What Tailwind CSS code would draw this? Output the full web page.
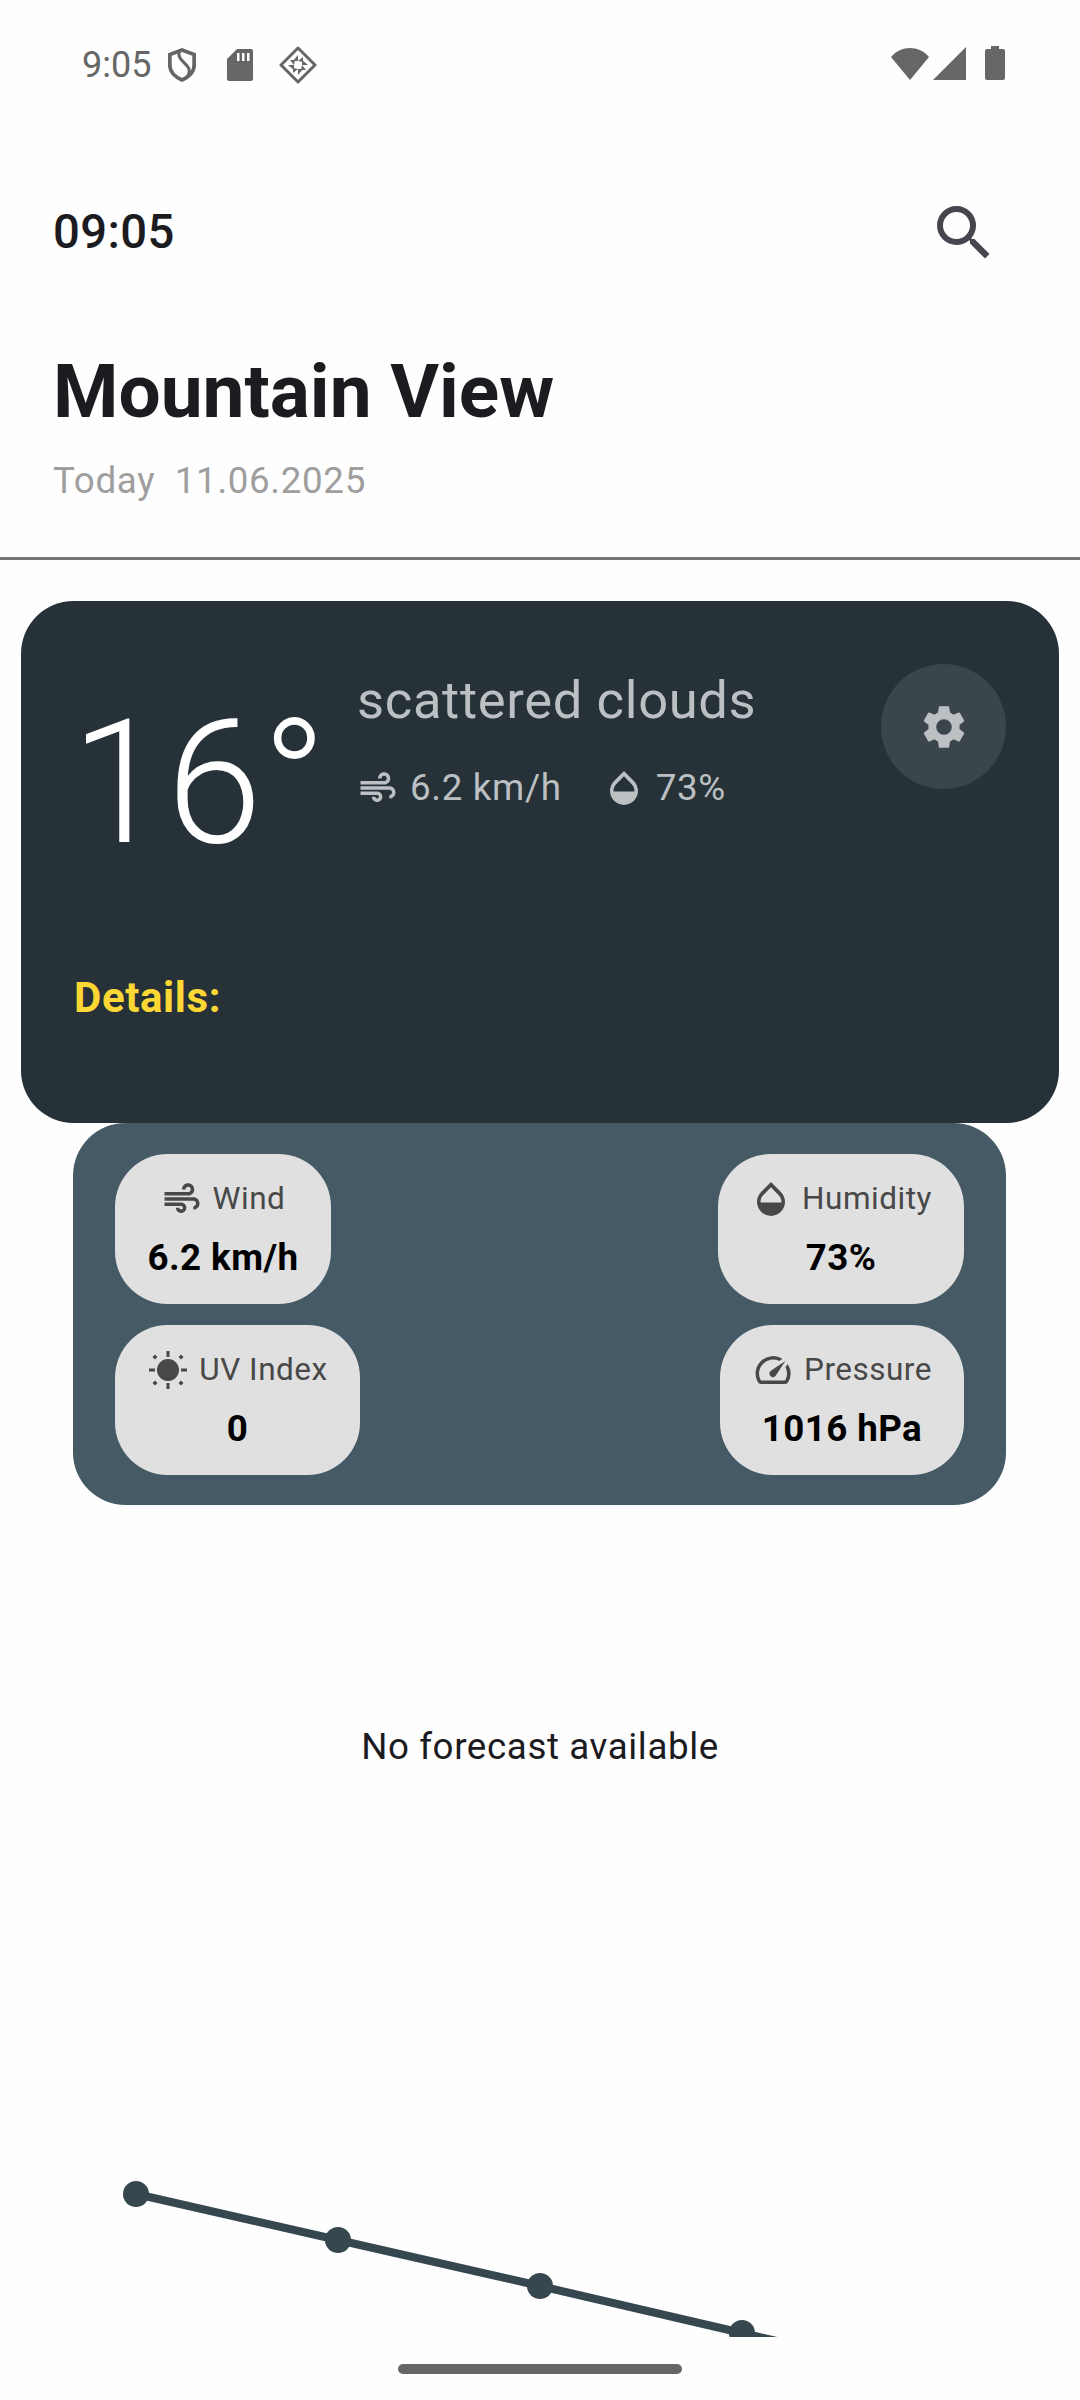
<!DOCTYPE html>
<html lang="en">
<head>
  <meta charset="UTF-8" />
  <title>Mountain View</title>
  <script src="https://cdn.jsdelivr.net/npm/@tailwindcss/browser@4"></script>
</head>
<body class="bg-white font-['Roboto',sans-serif] text-[#1c1b1f]">
<div class="relative w-[1080px] h-[2400px] overflow-hidden bg-[#fefefe]">

  <!-- STATUS BAR -->
  <div class="flex items-center justify-between h-[128px] pl-[82px] pr-[75px] text-[#666666]">
    <div class="mt-[2px] flex items-center">
      <span class="text-[36px] leading-none">9:05</span>
      <svg class="ml-[17px]" width="28" height="34" viewBox="0 0 28 34" fill="none" stroke="#666" stroke-width="3.800">
        <path d="M14 2 L26.200 6.500 V17 C26.200 24 21 29 14 32 C7 29 1.800 24 1.800 17 V6.500 Z"/>
        <path d="M11.500 3 C8 11 19 15 21 21 C22 25 20 28 18 30" stroke-width="3"/>
      </svg>
      <svg class="ml-[31px]" width="26" height="32" viewBox="0 0 26 32" fill="#666">
        <path d="M10 0 H24 A2 2 0 0 1 26 2 V30 A2 2 0 0 1 24 32 H2 A2 2 0 0 1 0 30 V10 Z"/>
        <path fill="#fefefe" d="M10 4 h2.500 v8 h-2.500 z M15 4 h2.500 v8 h-2.500 z M20 4 h2.500 v8 h-2.500 z"/>
      </svg>
      <svg class="ml-[26px]" width="38" height="38" viewBox="0 0 38 38" fill="#666">
        <path d="M19 2 L36 19 L19 36 L2 19 Z" fill="none" stroke="#666" stroke-width="3" stroke-linejoin="round"/>
        <path d="M19 9 V15 L14 15 Z M24 11 L24 16 L19 15 Z M29 19 L23 19 L23 14 Z M27 24 L22 24 L23 19 Z M19 29 V23 L24 23 Z M14 27 L14 22 L19 23 Z M9 19 L15 19 L15 24 Z M11 14 L16 14 L15 19 Z"/>
      </svg>
    </div>
    <div class="mb-[2px] flex items-center">
      <svg width="40" height="33" viewBox="0 0 40 33" fill="#666"><path d="M1 10 C11 -2 29 -2 39 10 L20 33 Z"/></svg>
      <svg class="ml-[3px]" width="33" height="33" viewBox="0 0 33 33" fill="#666"><path d="M33 0 V33 H0 Z"/></svg>
      <svg class="ml-[19px]" width="20" height="34" viewBox="0 0 20 34" fill="#666"><path d="M6 0 H14 V3 H18 A2 2 0 0 1 20 5 V32 A2 2 0 0 1 18 34 H2 A2 2 0 0 1 0 32 V5 A2 2 0 0 1 2 3 H6 Z"/></svg>
    </div>
  </div>

  <!-- TOP ROW -->
  <div class="flex items-center justify-between h-[208px] pt-[2px] pl-[53px] pr-[80px]">
    <span class="text-[47.25px] font-medium leading-none tracking-[0.4px]">09:05</span>
    <svg width="72" height="72" viewBox="0 0 24 24" fill="#49454f"><path d="M15.500 14h-.79l-.28-.27A6.471 6.471 0 0 0 16 9.500 6.500 6.500 0 1 0 9.500 16c1.610 0 3.090-.59 4.230-1.570l.27.28v.79l5 4.990L20.490 19l-4.990-5zm-6 0C7.010 14 5 11.990 5 9.500S7.010 5 9.500 5 14 7.010 14 9.500 11.990 14 9.500 14z"/></svg>
  </div>

  <!-- TITLE -->
  <div class="pl-[53px] pt-[12px]">
    <h1 class="text-[74.8px] font-bold leading-[88px]">Mountain View</h1>
    <p class="mt-[23px] text-[36.75px] leading-[44px] text-[#9e9e9e] tracking-[0.656px] whitespace-pre">Today  11.06.2025</p>
  </div>

  <div class="mt-[54px] h-[3px] bg-[#757575]"></div>

  <!-- CURRENT CARD -->
  <div class="relative ml-[21px] mt-[41px] h-[522px] w-[1038px] rounded-[52.5px] bg-[#263238] pt-[69px] pl-[50px]">
    <div class="flex items-start">
      <span class="mt-[27px] w-[286px] shrink-0 text-[172px] font-light leading-none text-white">16°</span>
      <div>
        <p class="text-[52.5px] leading-[60px] text-[#bcc0c3] tracking-[0.65px]">scattered clouds</p>
        <div class="mt-[37px] flex h-[42px] items-center text-[36.75px] leading-[42px] tracking-[0.656px] text-[#bcc0c3]">
          <svg width="42" height="42" viewBox="0 0 24 24" fill="currentColor"><use href="#wind-path"/></svg>
          <span class="ml-[11px]">6.2 km/h</span>
          <svg class="ml-[41px]" width="42" height="42" viewBox="0 0 24 24" fill="currentColor"><use href="#drop-path"/></svg>
          <span class="ml-[11px]">73%</span>
        </div>
      </div>
    </div>
    <button class="absolute right-[53px] top-[63px] flex h-[125px] w-[125px] items-center justify-center rounded-full bg-[#3b464c] text-[#bcc0c3]">
      <svg width="52" height="52" viewBox="0 0 24 24" fill="currentColor"><path d="M19.140 12.940c.04-.3.06-.61.06-.94 0-.32-.02-.64-.07-.94l2.030-1.580a.49.49 0 0 0 .12-.61l-1.920-3.320a.49.49 0 0 0-.59-.22l-2.390.96a7 7 0 0 0-1.620-.94l-.36-2.540a.48.48 0 0 0-.48-.41h-3.840a.47.47 0 0 0-.47.41l-.36 2.540c-.59.24-1.130.57-1.620.94l-2.390-.96a.49.49 0 0 0-.59.22L2.740 8.870c-.12.21-.08.47.12.61l2.030 1.580c-.05.3-.09.63-.09.94s.02.64.07.94l-2.030 1.580a.49.49 0 0 0-.12.61l1.920 3.320c.12.22.37.29.59.22l2.390-.96c.5.38 1.030.7 1.620.94l.36 2.540c.05.24.24.41.48.41h3.840c.24 0 .44-.17.47-.41l.36-2.540c.59-.24 1.130-.56 1.620-.94l2.390.96c.22.08.47 0 .59-.22l1.920-3.320a.49.49 0 0 0-.12-.61zM12 15.600A3.600 3.600 0 1 1 12 8.400a3.600 3.600 0 0 1 0 7.200z"/></svg>
    </button>
    <p class="absolute left-[53px] top-[373px] text-[42px] font-bold leading-[48px] tracking-[0.6px] text-[#fdd835]">Details:</p>
  </div>

  <!-- DETAILS PANEL -->
  <div class="ml-[73px] h-[382px] w-[933px] rounded-[52.5px] bg-[#455a64] px-[42px] pt-[31px]">
    <div class="flex justify-between">
      <div class="flex h-[150px] w-[216px] flex-col items-center justify-center gap-[17px] rounded-[52.5px] bg-[#e0e0e0] pb-[2px]">
        <div class="flex h-[42px] items-center text-[31.5px] tracking-[0.5px] text-[#484848]">
          <svg width="42" height="42" viewBox="0 0 24 24" fill="currentColor"><use href="#wind-path"/></svg>
          <span class="ml-[10px]">Wind</span>
        </div>
        <p class="text-[36.75px] font-bold leading-[42px] tracking-[0.4px] text-black">6.2 km/h</p>
      </div>
      <div class="flex h-[150px] w-[246px] flex-col items-center justify-center gap-[17px] rounded-[52.5px] bg-[#e0e0e0] pb-[2px]">
        <div class="flex h-[42px] items-center text-[31.5px] tracking-[0.5px] text-[#484848]">
          <svg width="42" height="42" viewBox="0 0 24 24" fill="currentColor"><use href="#drop-path"/></svg>
          <span class="ml-[10px]">Humidity</span>
        </div>
        <p class="text-[36.75px] font-bold leading-[42px] tracking-[0.4px] text-black">73%</p>
      </div>
    </div>
    <div class="mt-[21px] flex justify-between">
      <div class="flex h-[150px] w-[245px] flex-col items-center justify-center gap-[17px] rounded-[52.5px] bg-[#e0e0e0] pb-[2px]">
        <div class="flex h-[42px] items-center text-[31.5px] tracking-[0.5px] text-[#484848]">
          <svg width="42" height="42" viewBox="0 0 42 42" fill="currentColor">
            <circle cx="21" cy="21" r="11"/>
            <path d="M19.500 2h3v6h-3z M19.500 34h3v6h-3z M2 19.500h6v3H2z M34 19.500h6v3h-6z"/>
            <path d="M8 5.500 L10.500 8 L8 10.500 L5.500 8 Z M34 5.500 L36.500 8 L34 10.500 L31.500 8 Z M8 31.500 L10.500 34 L8 36.500 L5.500 34 Z M34 31.500 L36.500 34 L34 36.500 L31.500 34 Z"/>
          </svg>
          <span class="ml-[10px]">UV Index</span>
        </div>
        <p class="text-[36.75px] font-bold leading-[42px] tracking-[0.4px] text-black">0</p>
      </div>
      <div class="flex h-[150px] w-[244px] flex-col items-center justify-center gap-[17px] rounded-[52.5px] bg-[#e0e0e0] pb-[2px]">
        <div class="flex h-[42px] items-center text-[31.5px] tracking-[0.5px] text-[#484848]">
          <svg width="42" height="42" viewBox="0 0 24 24" fill="currentColor"><path d="M20.380 8.570l-1.230 1.850a8 8 0 0 1-.22 7.580H5.070A8 8 0 0 1 15.580 6.850l1.850-1.230A10 10 0 0 0 3.350 19a2 2 0 0 0 1.720 1h13.850a2 2 0 0 0 1.740-1 10 10 0 0 0-.27-10.440zm-9.790 6.840a2 2 0 0 0 2.830 0l5.660-8.490-8.490 5.660a2 2 0 0 0 0 2.830z"/></svg>
          <span class="ml-[10px]">Pressure</span>
        </div>
        <p class="text-[36.75px] font-bold leading-[42px] tracking-[0.4px] text-black">1016 hPa</p>
      </div>
    </div>
  </div>

  <!-- EMPTY FORECAST -->
  <p class="mt-[221px] text-center text-[36.75px] leading-[42px] tracking-[0.6px] text-[#1c1b1f]">No forecast available</p>

  <!-- CHART -->
  <svg class="absolute left-0 top-[2150px]" width="1080" height="187" viewBox="0 0 1080 187">
    <path d="M136 44 L338 90 L540 136 L742 183 L790 194" fill="none" stroke="#37474f" stroke-width="8"/>
    <circle cx="136" cy="44" r="13" fill="#37474f"/>
    <circle cx="338" cy="90" r="13" fill="#37474f"/>
    <circle cx="540" cy="136" r="13" fill="#37474f"/>
    <circle cx="742" cy="183" r="13" fill="#37474f"/>
  </svg>

  <!-- GESTURE BAR -->
  <div class="absolute bottom-[26px] left-[398px] h-[10px] w-[284px] rounded-full bg-[#666666]"></div>
</div>

<!-- shared icon shapes -->
<svg class="hidden" width="0" height="0">
  <defs>
    <g id="wind-path"><path d="M14.500 17c0 1.650-1.350 3-3 3s-3-1.350-3-3h2c0 .55.45 1 1 1s1-.45 1-1-.45-1-1-1H2v-2h9.500c1.650 0 3 1.350 3 3zM19 6.500C19 4.570 17.430 3 15.500 3S12 4.570 12 6.500h2c0-.83.67-1.500 1.500-1.500s1.500.67 1.500 1.500S16.330 8 15.500 8H2v2h13.500c1.930 0 3.500-1.570 3.500-3.500zm-.5 4.500H2v2h16.500c.83 0 1.500.67 1.500 1.500s-.67 1.500-1.500 1.500v2c1.930 0 3.500-1.570 3.500-3.500S20.430 11 18.500 11z"/></g>
    <g id="drop-path"><path d="M17.660 8L12 2.350 6.340 8C4.780 9.560 4 11.640 4 13.640s.78 4.110 2.340 5.670 3.610 2.350 5.660 2.350 4.100-.79 5.660-2.350S20 15.640 20 13.640 19.220 9.560 17.660 8zM6 14c.01-2 .62-3.270 1.760-4.400L12 5.270l4.240 4.380C17.380 10.770 17.990 12 18 14H6z"/></g>
  </defs>
</svg>
</body>
</html>
